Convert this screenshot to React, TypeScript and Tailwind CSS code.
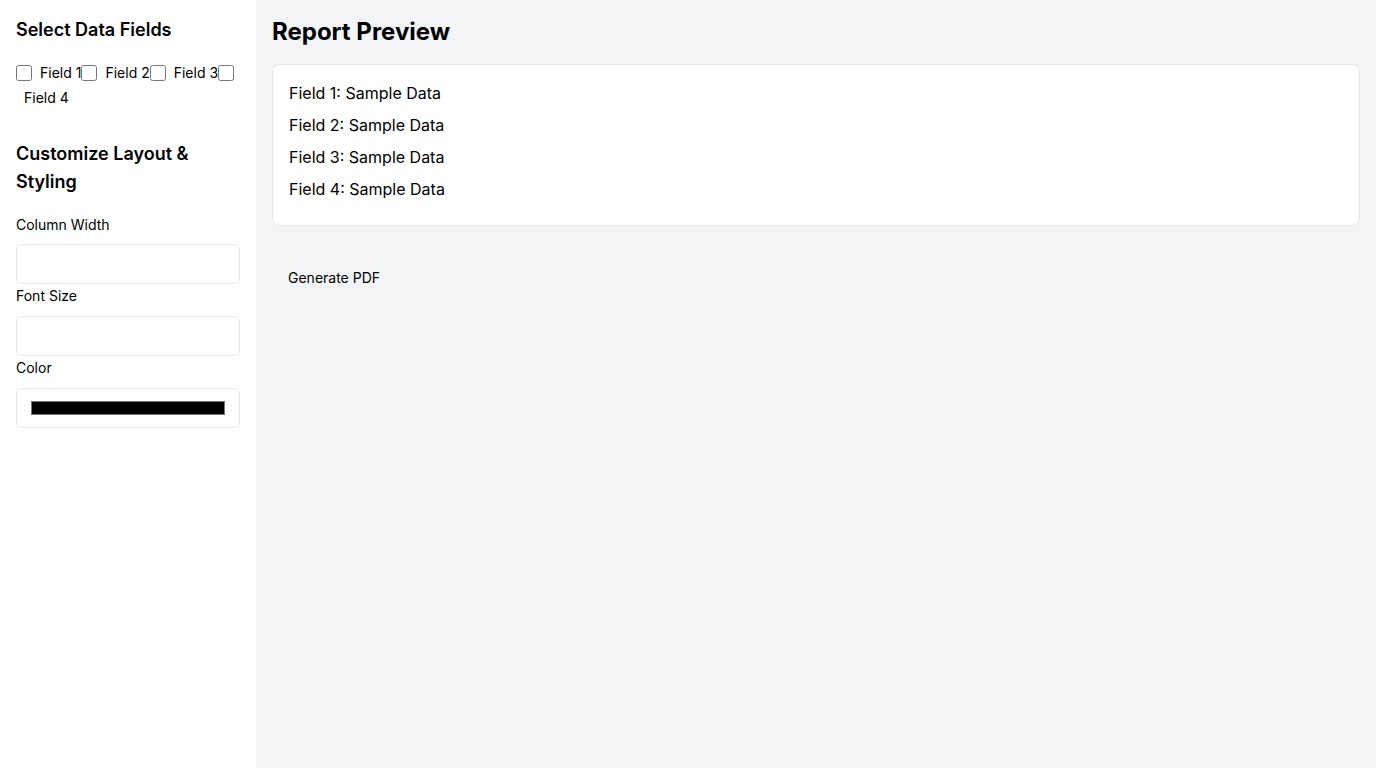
import { useState } from 'react';

const fields = ['Field 1', 'Field 2', 'Field 3', 'Field 4'];

export default function App() {
  const [selected, setSelected] = useState<string[]>([]);
  const [color, setColor] = useState('#000000');

  const toggle = (f: string) => {
    setSelected((s) => (s.includes(f) ? s.filter((x) => x !== f) : [...s, f]));
  };

  return (
    <div className="flex min-h-screen font-['Inter',sans-serif] text-black">
      {/* 사이드바 */}
      <aside className="w-64 shrink-0 bg-white p-4">
        <h2 className="text-lg font-semibold mb-4">Select Data Fields</h2>
        <div className="text-sm leading-6 mb-[30px]">
          {fields.map((f) => (
            <label key={f}>
              <input
                type="checkbox"
                className="m-0 w-4 h-4 align-middle"
                checked={selected.includes(f)}
                onChange={() => toggle(f)}
              />
              <span className="ml-2 align-middle">{f}</span>
            </label>
          ))}
        </div>

        <h2 className="text-lg font-semibold mb-[19px]">Customize Layout &amp; Styling</h2>
        <label className="block text-sm leading-5 mb-[9px]">Column Width</label>
        <input type="text" className="block w-full h-10 px-3 py-2 border border-gray-200 rounded-md" />
        <label className="block text-sm leading-5 mt-0.5 mb-2.5">Font Size</label>
        <input type="text" className="block w-full h-10 px-3 py-2 border border-gray-200 rounded-md" />
        <label className="block text-sm leading-5 mt-0.5 mb-2.5">Color</label>
        <input
          type="color"
          value={color}
          onChange={(e) => setColor(e.target.value)}
          className="block w-full h-10 px-3 py-2 border border-gray-200 rounded-md bg-white"
        />
      </aside>

      {/* 미리보기 */}
      <main className="flex-1 bg-gray-100 p-4">
        <h1 className="text-2xl font-bold mb-4">Report Preview</h1>
        <div className="bg-white rounded-lg border border-gray-200 p-4">
          {fields.map((f) => (
            <p key={f} className="mb-2">
              {f}: Sample Data
            </p>
          ))}
        </div>
        <button className="mt-[34px] px-4 py-2 text-sm">Generate PDF</button>
      </main>
    </div>
  );
}
